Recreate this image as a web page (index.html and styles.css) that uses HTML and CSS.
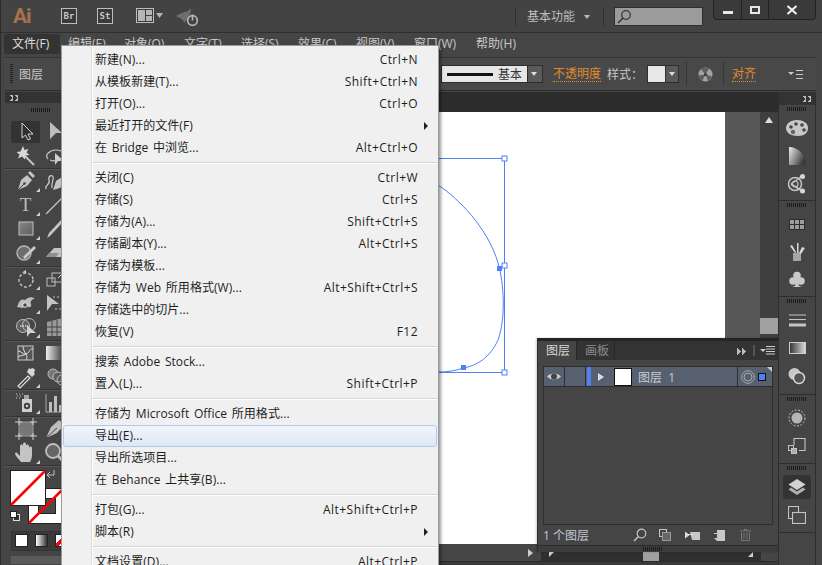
FILE: index.html
```html
<!doctype html>
<html lang="zh-CN">
  <head>
    <meta charset="UTF-8" />
    <title>Adobe Illustrator</title>
    <link rel="stylesheet" href="styles.css">
  </head>

  <body>
    <div class="app">
      <div class="titlebar">
        <span class="logo">Ai</span>
        <span class="bridge-btn bridge-first">Br</span>
        <span class="bridge-btn">St</span>
        <svg class="arrange" width="28" height="16" viewBox="0 0 28 16">
          <rect x="0.500" y="0.500" width="17" height="14" fill="#3c3c3c" stroke="#bdbdbd"/>
          <rect x="2" y="2" width="7" height="11" fill="#b5b5b5"/>
          <rect x="10" y="2" width="6" height="5" fill="#b5b5b5"/>
          <rect x="10" y="8" width="6" height="5" fill="#b5b5b5"/>
          <path d="M20 5h7l-3.500 5z" fill="#b5b5b5"/>
        </svg>
        <svg class="rocket" width="26" height="20" viewBox="0 0 26 20">
          <path d="M1 9c5-3 9-4 12-5l3-3c0 4-1 7-3 10-1 1-2 3-4 5l-1-3-3-2z" fill="#6f6f6f"/>
          <circle cx="17.500" cy="13.500" r="4.800" fill="none" stroke="#b5b5b5" stroke-width="1.700"/>
          <path d="M17.500 7.500v6" stroke="#b5b5b5" stroke-width="1.700"/>
        </svg>
        <span class="title-spacer"></span>
        <span class="title-sep"></span>
        <span class="workspace">基本功能</span>
        <span class="caret"></span>
        <span class="title-sep sep-search"></span>
        <span class="search">
          <svg width="15" height="15" viewBox="0 0 15 15">
            <circle cx="9" cy="6" r="4.300" fill="none" stroke="#333" stroke-width="1.200"/>
            <path d="M6 9l-5 5" stroke="#333" stroke-width="1.500"/>
          </svg>
        </span>
        <div class="winbtns">
          <span class="winbtn win-min"><i></i></span>
          <span class="winbtn win-max"><i></i></span>
          <span class="winbtn win-close">
            <svg width="12" height="10" viewBox="0 0 12 10"><path d="M1.500 1l9 8M10.500 1l-9 8" stroke="#eee" stroke-width="2.200"/></svg>
          </span>
        </div>
      </div>

      <div class="menubar">
        <span class="menubar-item is-open">文件(F)</span>
        <span class="menubar-item">编辑(E)</span>
        <span class="menubar-item w60">对象(O)</span>
        <span class="menubar-item w57">文字(T)</span>
        <span class="menubar-item w57">选择(S)</span>
        <span class="menubar-item w58">效果(C)</span>
        <span class="menubar-item w58">视图(V)</span>
        <span class="menubar-item w62">窗口(W)</span>
        <span class="menubar-item">帮助(H)</span>
      </div>

      <div class="controlbar">
        <span class="grip-v"></span>
        <span class="ctl-label">图层</span>
        <span class="ctl-spacer"></span>
        <span class="stroke-box"><i></i><b>基本</b></span>
        <span class="ctl-drop"></span>
        <span class="ctl-link link-opacity">不透明度</span>
        <span class="ctl-label label-style">样式：</span>
        <span class="style-swatch"></span>
        <span class="ctl-drop drop-small"></span>
        <span class="ctl-sep sep-a"></span>
        <svg class="globe" width="15" height="15" viewBox="0 0 15 15">
          <circle cx="7.500" cy="7.500" r="7" fill="#a2a2a2"/>
          <path d="M7.500 7.500L3 2.500a7 7 0 0 1 8-1zM7.500 7.500l6.500 2a7 7 0 0 1-4 4.500zM7.500 7.500l-3 6a7 7 0 0 1-4-5z" fill="#5e5e5e"/>
          <circle cx="7.500" cy="7.500" r="1.500" fill="#333"/>
        </svg>
        <span class="ctl-sep sep-b"></span>
        <span class="ctl-link link-align">对齐</span>
        <svg class="panel-menu menu-ctl" width="15" height="9" viewBox="0 0 15 9">
          <path d="M0 2h6l-3 3z" fill="#ccc"/>
          <path d="M8 .5h7M8 4.500h7M8 8.500h7" stroke="#ccc"/>
        </svg>
      </div>

      <div class="workarea">
        <div class="tools">
          <div class="collapse-bar"><span class="arrows-left"></span></div>
          <div class="grip-h"></div>

          <div class="tool-group group-select">
            <span class="tool is-active">
              <svg width="24" height="24" viewBox="0 0 24 24"><path d="M8 3l11 11h-5l2.500 5-2.500 1-2.500-5L8 18z" fill="#2f2f2f" stroke="#cfcfcf"/></svg>
            </span>
            <span class="tool">
              <svg width="24" height="24" viewBox="0 0 24 24"><path d="M7 3l12 11h-6l-6 6z" fill="#bdbdbd"/></svg>
            </span>
            <span class="tool">
              <svg width="24" height="24" viewBox="0 0 24 24"><path d="M11 12l9 9" stroke="#c4c4c4" stroke-width="2"/><path d="M9 2l1.500 4 4-1-2 3.500 3 2.500-4 .5-.5 4-3-3-4 2 1.500-4-3-2.500 4-.5z" fill="#d8d8d8"/></svg>
            </span>
            <span class="tool">
              <svg width="24" height="24" viewBox="0 0 24 24"><path d="M5 15c-4-4 2-9 8-9s9 3 7 7c-2 3-8 5-13 3" fill="none" stroke="#c4c4c4" stroke-width="1.200"/><path d="M12 9l9 8h-6l-3 4z" fill="#cfcfcf"/></svg>
            </span>
          </div>

          <div class="tool-group">
            <span class="tool has-more">
              <svg width="24" height="24" viewBox="0 0 24 24"><path d="M4 21l3-10 6-5 5 5-5 6z" fill="#c4c4c4"/><path d="M4 21l6-6" stroke="#444"/><circle cx="10.500" cy="14.500" r="1.300" fill="#444"/><path d="M14 4l2-2 5 5-2 2z" fill="#c4c4c4"/></svg>
            </span>
            <span class="tool">
              <svg width="24" height="24" viewBox="0 0 24 24"><path d="M3 20c-2-4 5-4 3-9-1-4 3-6 4-3 1 3-2 6-1 11" fill="none" stroke="#c4c4c4" stroke-width="1.300"/><path d="M10 21l3-9 6-4 3 3-5 8z" fill="#c4c4c4"/></svg>
            </span>
            <span class="tool has-more tool-type">T</span>
            <span class="tool">
              <svg width="24" height="24" viewBox="0 0 24 24"><path d="M3 21L21 3" stroke="#c4c4c4" stroke-width="1.300"/></svg>
            </span>
            <span class="tool has-more">
              <svg width="24" height="24" viewBox="0 0 24 24"><defs><linearGradient id="rect-fill" x1="0" y1="0" x2="1" y2="1"><stop offset="0" stop-color="#888"/><stop offset="1" stop-color="#5c5c5c"/></linearGradient></defs><rect x="5" y="5" width="14" height="13" fill="url(#rect-fill)" stroke="#b0b0b0" stroke-width="1.200"/></svg>
            </span>
            <span class="tool has-more">
              <svg width="24" height="24" viewBox="0 0 24 24"><path d="M4 21l3-2L20 5l-2-2L6 16z" fill="#c4c4c4"/></svg>
            </span>
            <span class="tool has-more">
              <svg width="24" height="24" viewBox="0 0 24 24"><circle cx="10" cy="12" r="7" fill="#6d6d6d" stroke="#b9b9b9" stroke-width="1.300"/><path d="M11 18L22 7l-2-2L9 16z" fill="#c9c9c9"/></svg>
            </span>
            <span class="tool">
              <svg width="24" height="24" viewBox="0 0 24 24"><path d="M3 16l8-9h10l-3 9z" fill="#c4c4c4"/><path d="M3 16l3-4h10l-3 4z" fill="#909090"/></svg>
            </span>
          </div>

          <div class="tool-group">
            <span class="tool has-more">
              <svg width="24" height="24" viewBox="0 0 24 24"><circle cx="12" cy="13" r="7" fill="none" stroke="#bdbdbd" stroke-width="1.500" stroke-dasharray="3 2"/><path d="M12 6V3L8 5.500z" fill="#d0d0d0"/></svg>
            </span>
            <span class="tool">
              <svg width="24" height="24" viewBox="0 0 24 24"><rect x="4" y="11" width="8" height="8" fill="none" stroke="#bdbdbd"/><rect x="9" y="6" width="11" height="9" fill="none" stroke="#bdbdbd"/><path d="M15 11l4-4" stroke="#ddd"/></svg>
            </span>
            <span class="tool has-more">
              <svg width="24" height="24" viewBox="0 0 24 24"><path d="M3 16c2-6 4-9 8-7 3-3 7-4 10-1-3 0-5 2-4 5 1 2-1 4-3 3l-3-4-2 5z" fill="#bdbdbd"/><circle cx="11" cy="14" r="2.300" fill="#444" stroke="#eee"/></svg>
            </span>
            <span class="tool">
              <svg width="24" height="24" viewBox="0 0 24 24"><path d="M4 4l12 9H9l-5 7z" fill="#c4c4c4"/><path d="M10 6h10v12H12" fill="none" stroke="#bdbdbd" stroke-dasharray="2 2"/></svg>
            </span>
            <span class="tool has-more">
              <svg width="24" height="24" viewBox="0 0 24 24"><circle cx="9" cy="11" r="6.500" fill="#606060" stroke="#bdbdbd"/><circle cx="15" cy="10" r="6.500" fill="none" stroke="#bdbdbd"/><path d="M6 11h8" stroke="#fff" stroke-dasharray="1.500 1"/><path d="M13 10l9 8h-6l-3 4z" fill="#d0d0d0"/></svg>
            </span>
            <span class="tool">
              <svg width="24" height="24" viewBox="0 0 24 24"><path d="M4 7l16-4v18H4z" fill="#9a9a9a"/><path d="M9 6v15M14 5v16M4 12h16M4 17h16" stroke="#444"/></svg>
            </span>
          </div>

          <div class="tool-group group-tight">
            <span class="tool">
              <svg width="24" height="24" viewBox="0 0 24 24"><rect x="4" y="5" width="15" height="14" fill="#555" stroke="#c8c8c8"/><path d="M4 10c4 0 4 4 8 3s3-6 7-5M9 5c0 3 1 5 3 8s0 4 1 6M4 16c3-2 5-1 8-3" fill="none" stroke="#dcdcdc"/></svg>
            </span>
            <span class="tool">
              <svg width="24" height="24" viewBox="0 0 24 24"><defs><linearGradient id="grad-tool"><stop offset="0" stop-color="#eee"/><stop offset="1" stop-color="#333"/></linearGradient></defs><rect x="3" y="5" width="18" height="14" fill="url(#grad-tool)"/></svg>
            </span>
            <span class="tool has-more">
              <svg width="24" height="24" viewBox="0 0 24 24"><path d="M4 21l10-10 2 2L6 23z" fill="#3f3f3f" stroke="#e2e2e2" stroke-width="1.200"/><path d="M13 7l5 5 3-3-1-1 1-3-2-2-3 1-1-1z" fill="#d6d6d6"/></svg>
            </span>
            <span class="tool">
              <svg width="24" height="24" viewBox="0 0 24 24"><circle cx="10" cy="9" r="5" fill="#777" stroke="#bbb"/><circle cx="15" cy="12" r="5" fill="#5c5c5c" stroke="#bbb"/><circle cx="19" cy="15" r="5" fill="none" stroke="#bbb"/></svg>
            </span>
          </div>

          <div class="tool-group group-spray">
            <span class="tool has-more">
              <svg width="24" height="24" viewBox="0 0 24 24"><rect x="8" y="8" width="10" height="13" fill="#d0d0d0"/><circle cx="13" cy="15" r="3.200" fill="#3f3f3f"/><circle cx="13" cy="15" r="1.300" fill="#d0d0d0"/><rect x="10" y="4" width="5" height="4" fill="#a5a5a5"/><path d="M2 3h1M5 3h1M8 3h1M3 5h1M6 5h1M2 7h1M5 7h1" stroke="#ccc"/></svg>
            </span>
            <span class="tool">
              <svg width="24" height="24" viewBox="0 0 24 24"><path d="M3 3v18h18" fill="none" stroke="#aaa"/><rect x="6" y="11" width="3" height="10" fill="#bdbdbd"/><rect x="11" y="5" width="3" height="16" fill="#bdbdbd"/><rect x="16" y="14" width="3" height="7" fill="#bdbdbd"/></svg>
            </span>
          </div>

          <div class="tool-group group-tight">
            <span class="tool">
              <svg width="24" height="24" viewBox="0 0 24 24"><rect x="5" y="5" width="14" height="14" fill="#777" stroke="#999"/><path d="M1 5h7M16 5h7M1 19h7M16 19h7M5 1v7M5 16v7M19 1v7M19 16v7" stroke="#cfcfcf"/></svg>
            </span>
            <span class="tool">
              <svg width="24" height="24" viewBox="0 0 24 24"><path d="M3 21l5-11 8-7 5 5-7 8z" fill="#bdbdbd"/><path d="M3 21l11-10" stroke="#444"/></svg>
            </span>
            <span class="tool has-more">
              <svg width="24" height="24" viewBox="0 0 24 24"><path d="M7 21c-2-3-5-5-6-8 0-2 2-2 3 0l2 2V5c0-2 3-2 3 0V3c0-2 3-2 3 0v2c0-2 3-2 3 0v2c0-2 3-2 3 0v7c0 3-1 5-2 7z" fill="#c4c4c4"/></svg>
            </span>
            <span class="tool">
              <svg width="24" height="24" viewBox="0 0 24 24"><circle cx="10" cy="10" r="7" fill="#666" stroke="#bdbdbd" stroke-width="1.800"/><path d="M15 15l7 7" stroke="#bdbdbd" stroke-width="3"/></svg>
            </span>
          </div>

          <svg class="color-boxes" width="50" height="56" viewBox="0 0 50 56">
            <path d="M44 0v5h-6M40 2l-3 3 3 3" fill="none" stroke="#ccc" stroke-width="0.900"/>
            <rect x="18.500" y="18.500" width="40" height="35" fill="#fff" stroke="#222"/>
            <rect x="28.500" y="28.500" width="17" height="15" fill="#4a4a4a" stroke="#222"/>
            <path d="M19 53L52 20" stroke="#f00" stroke-width="2.500"/>
            <rect x="0.500" y="0.500" width="35" height="35" fill="#fff" stroke="#222"/>
            <path d="M1 35L35 1" stroke="#f00" stroke-width="2.500"/>
            <rect x="3.500" y="44.500" width="6" height="6" fill="#333" stroke="#ddd"/>
            <rect x="0.500" y="41.500" width="6" height="6" fill="#fff" stroke="#222"/>
          </svg>

          <div class="color-modes">
            <span class="mode mode-solid"></span>
            <span class="mode mode-gradient"></span>
            <span class="mode mode-none"></span>
          </div>
          <div class="tools-bottom"></div>
        </div>

        <div class="doc">
          <div class="doc-tabs"></div>
          <div class="doc-main">
            <div class="pasteboard">
              <div class="artboard"></div>
            </div>
            <div class="vscroll">
              <span class="vscroll-arrow"></span>
              <span class="vscroll-thumb"></span>
            </div>
          </div>
          <div class="statusbar">
            <span class="status-arrow"></span>
            <div class="hscroll"><span class="hscroll-thumb"></span></div>
          </div>
          <div class="doc-foot"></div>
        </div>

        <div class="dock">
          <div class="collapse-bar"><span class="arrows-left arrows-dock"></span></div>

          <div class="dock-group">
            <div class="grip-h"></div>
            <span class="dock-icon">
              <svg width="24" height="20" viewBox="0 0 24 20"><path d="M12 2C5 2 1 6 1 10c0 5 5 8 12 8 6 0 10-3 10-8 0-5-5-8-11-8z" fill="#c8c8c8"/><circle cx="6" cy="9" r="1.800" fill="#444"/><circle cx="11" cy="6" r="1.800" fill="#444"/><circle cx="17" cy="7" r="1.800" fill="#444"/><circle cx="19" cy="12" r="1.800" fill="#444"/><circle cx="8" cy="14" r="2.200" fill="#666"/></svg>
            </span>
            <span class="dock-icon">
              <svg width="20" height="20" viewBox="0 0 20 20"><defs><linearGradient id="guide-fill" x1="0" y1="0" x2="1" y2="0.500"><stop offset="0" stop-color="#ededed"/><stop offset="1" stop-color="#3a3a3a"/></linearGradient></defs><path d="M2 1c9 0 17 8 17 18H2z" fill="url(#guide-fill)"/></svg>
            </span>
            <span class="dock-icon">
              <svg width="20" height="22" viewBox="0 0 20 22"><circle cx="8" cy="11" r="6.500" fill="none" stroke="#c4c4c4" stroke-width="1.500"/><circle cx="8" cy="11" r="3" fill="none" stroke="#c4c4c4" stroke-width="1.200"/><path d="M4 11L15 3M4 11l11 7" stroke="#c4c4c4" stroke-width="1.500"/><circle cx="15.500" cy="3.500" r="2.500" fill="#d8d8d8"/><circle cx="15.500" cy="18" r="2.500" fill="#d8d8d8"/></svg>
            </span>
          </div>

          <div class="dock-group">
            <div class="grip-h"></div>
            <span class="dock-icon">
              <svg width="16" height="11" viewBox="0 0 16 11"><rect width="16" height="11" fill="#2e2e2e"/><path d="M1 1h4v4H1zM6 1h4v4H6zM11 1h4v4h-4zM1 6h4v4H1zM6 6h4v4H6zM11 6h4v4h-4z" fill="#9c9c9c"/></svg>
            </span>
            <span class="dock-icon">
              <svg width="16" height="20" viewBox="0 0 16 20"><path d="M4 11h8v8H4z" fill="#a5a5a5"/><path d="M6 11L1 4l2-1 4 7zM8 11V1h1.500v10zM10 11l3-6 3 1-4 6z" fill="#d5d5d5"/></svg>
            </span>
            <span class="dock-icon">
              <svg width="16" height="18" viewBox="0 0 16 18"><circle cx="8" cy="4.500" r="3.800" fill="#c8c8c8"/><circle cx="4" cy="10" r="3.800" fill="#c8c8c8"/><circle cx="12" cy="10" r="3.800" fill="#c8c8c8"/><path d="M7 8h2l1 7 3 1H3l3-1z" fill="#c8c8c8"/></svg>
            </span>
          </div>

          <div class="dock-group group-pad4">
            <div class="grip-h"></div>
            <span class="dock-icon">
              <svg width="17" height="13" viewBox="0 0 17 13"><path d="M0 1h17M0 5.500h17" stroke="#c4c4c4" stroke-width="1.200"/><path d="M0 11h17" stroke="#c4c4c4" stroke-width="3"/></svg>
            </span>
            <span class="dock-icon">
              <svg width="17" height="12" viewBox="0 0 17 12"><defs><linearGradient id="grad-panel"><stop offset="0" stop-color="#333"/><stop offset="1" stop-color="#ddd"/></linearGradient></defs><rect x="0.500" y="0.500" width="16" height="11" fill="url(#grad-panel)" stroke="#ccc"/></svg>
            </span>
            <span class="dock-icon">
              <svg width="18" height="18" viewBox="0 0 18 18"><circle cx="6.500" cy="7" r="6" fill="#c8c8c8"/><circle cx="11" cy="11" r="5.500" fill="#555" stroke="#ddd" stroke-width="1.400"/></svg>
            </span>
          </div>

          <div class="dock-group group-pad3">
            <div class="grip-h"></div>
            <span class="dock-icon">
              <svg width="18" height="18" viewBox="0 0 18 18"><circle cx="9" cy="9" r="8" fill="none" stroke="#c4c4c4" stroke-dasharray="2 1.500"/><circle cx="9" cy="9" r="5.500" fill="#b5b5b5"/></svg>
            </span>
            <span class="dock-icon">
              <svg width="18" height="16" viewBox="0 0 18 16"><path d="M6 7V.5h11v12h-6" fill="none" stroke="#c4c4c4" stroke-width="1.100"/><rect x="0.500" y="7.500" width="5" height="5" fill="none" stroke="#c4c4c4"/><rect x="3.500" y="10.500" width="5" height="5" fill="#aaa" stroke="#c4c4c4"/></svg>
            </span>
          </div>

          <div class="dock-group group-pad3">
            <div class="grip-h"></div>
            <span class="dock-icon is-active">
              <svg width="18" height="18" viewBox="0 0 18 18"><path d="M9 1l8.500 5.500L9 12 .5 6.500z" fill="#d2d2d2"/><path d="M3 9.500L.5 11.500 9 17l8.500-5.500-2.500-2L9 13.500z" fill="#b0b0b0"/></svg>
            </span>
            <span class="dock-icon">
              <svg width="18" height="18" viewBox="0 0 18 18"><rect x="0.500" y="0.500" width="10" height="12" fill="none" stroke="#c4c4c4" stroke-width="1.100"/><rect x="4.500" y="6.500" width="13" height="11" fill="#4a4a4a" stroke="#c4c4c4" stroke-width="1.100"/></svg>
            </span>
          </div>
        </div>
      </div>

      <svg class="art" width="120" height="240" viewBox="0 0 120 240">
        <path d="M0 .5h66.500V214.500H0" fill="none" stroke="#4f80f5"/>
        <path d="M0 27C20 40 50 70 60 105 66 125 68 160 60 182 52 200 38 208 25 210 18 213 8 214 0 214" fill="none" stroke="#4f80f5"/>
        <rect x="64" y="-2" width="5" height="5" fill="#fff" stroke="#4f80f5"/>
        <rect x="64" y="105" width="5" height="5" fill="#fff" stroke="#4f80f5"/>
        <rect x="64" y="212" width="5" height="5" fill="#fff" stroke="#4f80f5"/>
        <rect x="59" y="108" width="5" height="5" fill="#4f80f5"/>
        <rect x="23" y="207" width="5" height="5" fill="#4f80f5"/>
      </svg>

      <div class="layers-panel">
        <div class="panel-tabs">
          <span class="panel-tab is-current">图层</span>
          <span class="panel-tab">画板</span>
          <span class="tabs-spacer"></span>
          <span class="arrows-right"></span>
          <span class="tabs-sep"></span>
          <svg class="panel-menu" width="15" height="9" viewBox="0 0 15 9">
            <path d="M0 3h6l-3 3z" fill="#ccc"/>
            <path d="M6 .5h9M6 3h9M6 5.500h9M6 8h9" stroke="#ccc"/>
          </svg>
        </div>
        <div class="layer-list">
          <div class="layer-row">
            <span class="cell cell-eye">
              <svg width="14" height="9" viewBox="0 0 14 9"><path d="M0 4.500C3 .5 11 .5 14 4.500 11 8.500 3 8.500 0 4.500z" fill="#c8c8c8"/><circle cx="7" cy="4.500" r="3" fill="#444"/></svg>
            </span>
            <span class="cell cell-lock"></span>
            <span class="layer-color"></span>
            <span class="layer-arrow"></span>
            <span class="layer-thumb"></span>
            <span class="layer-name">图层&nbsp; 1</span>
            <span class="cell cell-target">
              <svg width="14" height="14" viewBox="0 0 14 14"><circle cx="7" cy="7" r="6.300" fill="none" stroke="#a8a8a8"/><circle cx="7" cy="7" r="4" fill="none" stroke="#a8a8a8"/></svg>
            </span>
            <span class="layer-select"></span>
          </div>
        </div>
        <div class="panel-foot">
          <span class="foot-text">1 个图层</span>
          <svg class="foot-search" width="14" height="14" viewBox="0 0 14 14"><circle cx="8.500" cy="5.500" r="4.300" fill="none" stroke="#c4c4c4" stroke-width="1.200"/><path d="M5.500 8.500L1 13" stroke="#c4c4c4" stroke-width="1.500"/></svg>
          <svg class="foot-icon" width="12" height="12" viewBox="0 0 12 12"><rect x="0.500" y="0.500" width="7" height="7" fill="none" stroke="#c4c4c4"/><rect x="3.500" y="3.500" width="8" height="8" fill="#666" stroke="#999"/></svg>
          <svg class="foot-icon icon-move" width="15" height="9" viewBox="0 0 15 9"><path d="M5 1h10v8H7z" fill="#c8c8c8"/><path d="M0 1l4 3-4 3zM3 3.500h5" stroke="#ddd" fill="#ddd"/></svg>
          <svg class="foot-icon icon-new" width="11" height="11" viewBox="0 0 11 11"><path d="M0 3h3V0h8v11H3L0 8z" fill="#c8c8c8"/><path d="M0 4h3v4H0z" fill="#444"/></svg>
          <svg class="foot-icon icon-trash" width="11" height="12" viewBox="0 0 11 12"><path d="M0 2h11M4 2V.5h3V2M1.500 3.500v8h8v-8M4 4v6M7 4v6" fill="none" stroke="#777"/></svg>
          <span class="resize-dots"></span>
        </div>
        <div class="panel-grip"><span class="grip-h grip-panel"></span></div>
      </div>

      <div class="filemenu">
        <div class="fm-item"><span>新建(N)...</span><kbd>Ctrl+N</kbd></div>
        <div class="fm-item"><span>从模板新建(T)...</span><kbd>Shift+Ctrl+N</kbd></div>
        <div class="fm-item"><span>打开(O)...</span><kbd>Ctrl+O</kbd></div>
        <div class="fm-item fm-sub"><span>最近打开的文件(F)</span></div>
        <div class="fm-item"><span>在 Bridge 中浏览...</span><kbd>Alt+Ctrl+O</kbd></div>
        <div class="fm-sep"></div>
        <div class="fm-item"><span>关闭(C)</span><kbd>Ctrl+W</kbd></div>
        <div class="fm-item"><span>存储(S)</span><kbd>Ctrl+S</kbd></div>
        <div class="fm-item"><span>存储为(A)...</span><kbd>Shift+Ctrl+S</kbd></div>
        <div class="fm-item"><span>存储副本(Y)...</span><kbd>Alt+Ctrl+S</kbd></div>
        <div class="fm-item"><span>存储为模板...</span></div>
        <div class="fm-item"><span>存储为 Web 所用格式(W)...</span><kbd>Alt+Shift+Ctrl+S</kbd></div>
        <div class="fm-item"><span>存储选中的切片...</span></div>
        <div class="fm-item"><span>恢复(V)</span><kbd>F12</kbd></div>
        <div class="fm-sep"></div>
        <div class="fm-item"><span>搜索 Adobe Stock...</span></div>
        <div class="fm-item"><span>置入(L)...</span><kbd>Shift+Ctrl+P</kbd></div>
        <div class="fm-sep"></div>
        <div class="fm-item"><span>存储为 Microsoft Office 所用格式...</span></div>
        <div class="fm-item is-hover"><span>导出(E)...</span></div>
        <div class="fm-item"><span>导出所选项目...</span></div>
        <div class="fm-item"><span>在 Behance 上共享(B)...</span></div>
        <div class="fm-sep"></div>
        <div class="fm-item"><span>打包(G)...</span><kbd>Alt+Shift+Ctrl+P</kbd></div>
        <div class="fm-item fm-sub"><span>脚本(R)</span></div>
        <div class="fm-sep"></div>
        <div class="fm-item"><span>文档设置(D)...</span><kbd>Alt+Ctrl+P</kbd></div>
      </div>
    </div>
  </body>
</html>
```

FILE: styles.css
```css
* {
  box-sizing: border-box;
}

html,
body {
  margin: 0;
  height: 100%;
  overflow: hidden;
  background: #333;
}

.app {
  position: relative;
  display: flex;
  flex-direction: column;
  width: 822px;
  height: 565px;
  padding: 0 6px 0 4px;
  overflow: hidden;
  background: #454545;
  color: #d2d2d2;
  font: 12px "Open Sans", "Noto Sans CJK SC", sans-serif;
  border-left: 1px solid #2a2a2a;
}

/* title bar */
.titlebar {
  display: flex;
  align-items: center;
  height: 33px;
  margin: 0 -6px 0 -4px;
  padding-left: 12px;
  background: #434343;
  border-bottom: 1px solid #2f2f2f;
}

.logo {
  width: 48px;
  color: #a9714c;
  letter-spacing: -1px;
  font: bold 21px Roboto, sans-serif;
}

.bridge-btn {
  display: flex;
  align-items: center;
  justify-content: center;
  width: 16px;
  height: 16px;
  margin-right: 20px;
  background: #3a3a3a;
  border: 1px solid #bdbdbd;
  color: #c8c8c8;
  font: bold 9px "DejaVu Sans Mono", monospace;
}

.arrange {
  margin: 0 11px 0 3px;
}

.rocket {
  margin-top: 2px;
}

.title-spacer {
  flex: 1;
}

.title-sep {
  width: 1px;
  height: 19px;
  margin-right: 11px;
  background: #2f2f2f;
}

.workspace {
  color: #bdbdbd;
}

.caret {
  width: 0;
  height: 0;
  margin: 2px 13px 0 9px;
  border: 3px solid transparent;
  border-top: 4px solid #bbb;
  border-bottom: 0;
}

.sep-search {
  margin-right: 10px;
}

.search {
  display: flex;
  align-items: center;
  width: 89px;
  height: 19px;
  padding-left: 2px;
  background: #9b9b9b;
  border: 1px solid #2e2e2e;
}

.winbtns {
  display: flex;
  align-self: flex-start;
  height: 20px;
  margin: 0 6px 0 10px;
  background: #3a3a3a;
  border: 1px solid #232323;
  border-top: 0;
  border-radius: 0 0 4px 4px;
}

.winbtn {
  display: flex;
  align-items: center;
  justify-content: center;
  border-right: 1px solid #232323;
}

.win-min {
  width: 28px;
}

.win-min i {
  width: 10px;
  height: 3px;
  margin-top: 6px;
  background: #e6e6e6;
}

.win-max {
  width: 27px;
}

.win-max i {
  width: 10px;
  height: 8px;
  border: 2px solid #e6e6e6;
}

.win-close {
  width: 46px;
  border-right: 0;
}

/* menu bar */
.menubar {
  display: flex;
  height: 24px;
  padding-top: 1px;
  margin-left: -1px;
}

.menubar-item {
  width: 56px;
  height: 20px;
  padding-left: 8px;
  line-height: 19px;
  white-space: nowrap;
  color: #c8c8c8;
}

.menubar-item.is-open {
  background: #333;
  border-radius: 2px;
  color: #ddd;
}

.w57 { width: 57px; }
.w58 { width: 58px; }
.w60 { width: 60px; }
.w62 { width: 62px; }

/* control bar */
.controlbar {
  display: flex;
  align-items: center;
  height: 34px;
  background: #484848;
  border-top: 1px solid #333;
  border-bottom: 1px solid #2c2c2c;
}

.grip-v {
  width: 3px;
  height: 20px;
  margin: 0 6px 0 5px;
  background: repeating-linear-gradient(#222 0 1px, transparent 1px 2px);
}

.ctl-label {
  color: #c8c8c8;
}

.ctl-spacer {
  flex: 1;
}

.stroke-box {
  display: flex;
  align-items: center;
  width: 87px;
  height: 18px;
  padding-left: 5px;
  background: #e6e6e6;
  border: 1px solid #2e2e2e;
  color: #333;
}

.stroke-box i {
  width: 46px;
  height: 3px;
  margin-right: 5px;
  background: #111;
}

.stroke-box b {
  font-weight: normal;
}

.ctl-drop {
  position: relative;
  width: 15px;
  height: 18px;
  background: #5a5a5a;
  border: 1px solid #2e2e2e;
  border-left: 0;
}

.drop-small {
  width: 13px;
}

.ctl-drop::after {
  content: "";
  position: absolute;
  top: 6px;
  left: 3px;
  border: 3px solid transparent;
  border-top: 4px solid #ddd;
  border-bottom: 0;
}

.ctl-link {
  color: #e28a2e;
  border-bottom: 1px dotted #e28a2e;
  line-height: 15px;
}

.link-opacity {
  margin-left: 10px;
}

.label-style {
  margin-left: 6px;
  width: 40px;
}

.style-swatch {
  width: 19px;
  height: 18px;
  background: #e8e8e8;
  border: 1px solid #2e2e2e;
}

.ctl-sep {
  width: 1px;
  height: 24px;
  background: #383838;
}

.sep-a {
  margin-left: 7px;
}

.globe {
  margin: 0 10px 0 11px;
}

.link-align {
  margin-left: 8px;
}

.menu-ctl {
  margin: 0 13px 0 32px;
}

/* work area */
.workarea {
  display: flex;
  flex: 1;
  min-height: 0;
  margin-top: 1px;
}

.tools {
  display: flex;
  flex-direction: column;
  flex: none;
  width: 57px;
  background: #454545;
  border-right: 1px solid #2e2e2e;
}

.collapse-bar {
  display: flex;
  align-items: center;
  height: 11px;
  background: #333;
}

.arrows-left {
  width: 9px;
  height: 6px;
  margin-left: 4px;
  background:
    linear-gradient(to top right, transparent 50%, #bbb 50%) 0 0 / 4px 3px no-repeat,
    linear-gradient(to bottom right, transparent 50%, #bbb 50%) 0 3px / 4px 3px no-repeat,
    linear-gradient(to top right, transparent 50%, #bbb 50%) 5px 0 / 4px 3px no-repeat,
    linear-gradient(to bottom right, transparent 50%, #bbb 50%) 5px 3px / 4px 3px no-repeat;
}

.arrows-dock {
  margin-left: auto;
  margin-right: 4px;
}

.grip-h {
  flex: none;
  width: 20px;
  height: 4px;
  margin: 2px auto 3px;
  background: repeating-linear-gradient(90deg, #1c1c1c 0 1px, transparent 1px 2px);
}

.tools > .grip-h {
  margin: 5px 0 7px 26px;
}

.tool-group {
  display: grid;
  grid-template-columns: 29px 29px;
  grid-auto-rows: 24px;
  padding: 0 0 1px 6px;
  border-bottom: 1px solid #333;
  box-shadow: 0 1px 0 #555;
}

.group-select {
  grid-auto-rows: 24.500px;
  padding-bottom: 0;
}

.group-tight {
  padding-bottom: 0;
}

.group-spray {
  padding-top: 1px;
}

.tool {
  position: relative;
  display: flex;
  align-items: center;
  justify-content: center;
  width: 29px;
  height: 24px;
}

.tool.is-active {
  height: 22px;
  margin-top: 2px;
  background: #333;
  border-radius: 2px;
}

.has-more::after {
  content: "";
  position: absolute;
  right: 0;
  bottom: 1px;
  border-style: solid;
  border-width: 0 0 4px 4px;
  border-color: transparent transparent #d0d0d0 transparent;
}

.tool-type {
  color: #bdbdbd;
  font: 19px "Liberation Serif", serif;
}

.color-boxes {
  flex: none;
  margin: 4px 0 0 5px;
  overflow: visible;
}

.color-modes {
  display: flex;
  gap: 7px;
  height: 20px;
  margin: 5px 0 0 6px;
  padding: 2px 3px;
  background: #3a3a3a;
  border: 1px solid #333;
}

.mode {
  flex: none;
  width: 13px;
  height: 13px;
  border: 1px solid #222;
}

.mode-solid {
  background: #fff;
}

.mode-gradient {
  background: linear-gradient(90deg, #fff, #333);
}

.mode-none {
  background: linear-gradient(to top left, #fff 40%, #f00 40% 60%, #fff 60%);
}

.tools-bottom {
  height: 8px;
  margin: 5px 0 0 6px;
  background: #5a5a5a;
}

/* document */
.doc {
  display: flex;
  flex-direction: column;
  flex: 1;
  min-width: 0;
  background: #535353;
}

.doc-tabs {
  flex: none;
  height: 20px;
  background: #2c2c2c;
}

.doc-main {
  display: flex;
  flex: 1;
  min-height: 0;
}

.pasteboard {
  flex: 1;
  padding-right: 35px;
  background: #585858;
}

.artboard {
  height: 100%;
  background: #fff;
}

.vscroll {
  position: relative;
  flex: none;
  width: 18px;
  background: #3f3f3f;
}

.vscroll-arrow {
  position: absolute;
  top: 5px;
  left: 5px;
  border-style: solid;
  border-width: 0 4px 6px;
  border-color: transparent transparent #ddd;
}

.vscroll-thumb {
  position: absolute;
  top: 206px;
  left: 0;
  width: 100%;
  height: 16px;
  background: #a0a0a0;
}

.statusbar {
  display: flex;
  flex: none;
  height: 18px;
  padding-left: 466px;
  background: #454545;
  border-bottom: 1px solid #2a2a2a;
}

.status-arrow {
  flex: none;
  width: 0;
  height: 0;
  margin: 5px 0 0 0;
  border-style: solid;
  border-width: 4px 0 4px 5px;
  border-color: transparent transparent transparent #ccc;
}

.hscroll {
  position: relative;
  width: 220px;
  height: 9px;
  margin: 8px 0 0 8px;
  background: #2f2f2f;
}

.hscroll::before,
.hscroll::after {
  content: "";
  position: absolute;
  top: 0;
  border-style: solid;
  border-color: #d0d0d0 transparent transparent;
}

.hscroll::before {
  left: 8px;
  border-width: 5px 5px 0 0;
}

.hscroll::after {
  right: 8px;
  border-width: 0 0 5px 5px;
  border-color: transparent transparent #d0d0d0;
}

.hscroll-thumb {
  position: absolute;
  top: 0;
  left: 102px;
  width: 16px;
  height: 100%;
  background: #a0a0a0;
}

.doc-foot {
  flex: none;
  height: 3px;
  background: #3a3a3a;
}

/* right dock */
.dock {
  display: flex;
  flex-direction: column;
  flex: none;
  width: 38px;
  background: #454545;
  border-left: 1px solid #2e2e2e;
  border-right: 1px solid #2e2e2e;
}

.dock .collapse-bar {
  flex: none;
  height: 13px;
}

.dock-group {
  display: flex;
  flex-direction: column;
  align-items: center;
  padding-bottom: 2px;
  border-bottom: 1px solid #2e2e2e;
}

.group-pad4 {
  padding-bottom: 4px;
}

.group-pad3 {
  padding-bottom: 3px;
}

.dock-icon {
  display: flex;
  align-items: center;
  justify-content: center;
  width: 28px;
  height: 28px;
  flex: none;
}

.dock-icon.is-active {
  height: 24px;
  margin: 2px 0;
  background: #333;
  border-radius: 3px;
}

/* vector selection on the artboard */
.art {
  position: absolute;
  top: 158px;
  left: 437px;
  overflow: visible;
}

/* floating layers panel */
.layers-panel {
  position: absolute;
  top: 338px;
  left: 536px;
  display: flex;
  flex-direction: column;
  width: 241px;
  height: 214px;
  background: #454545;
  border-top: 3px solid #242424;
  border-left: 1px solid #2e2e2e;
  box-shadow: -1px 0 2px rgba(0, 0, 0, 0.2);
}

.panel-tabs {
  display: flex;
  align-items: center;
  flex: none;
  height: 19px;
  background: #333;
}

.panel-tab {
  width: 38px;
  height: 19px;
  padding-left: 8px;
  line-height: 19px;
  color: #8c8c8c;
  border-right: 1px solid #262626;
}

.panel-tab.is-current {
  width: 39px;
  background: #454545;
  color: #d8d8d8;
}

.tabs-spacer {
  flex: 1;
}

.arrows-right {
  width: 10px;
  height: 8px;
  background:
    linear-gradient(to bottom left, transparent 50%, #bbb 50%) 0 0 / 4px 4px no-repeat,
    linear-gradient(to top left, transparent 50%, #bbb 50%) 0 4px / 4px 4px no-repeat,
    linear-gradient(to bottom left, transparent 50%, #bbb 50%) 5px 0 / 4px 4px no-repeat,
    linear-gradient(to top left, transparent 50%, #bbb 50%) 5px 4px / 4px 4px no-repeat;
}

.tabs-sep {
  width: 2px;
  height: 11px;
  margin: 0 5px 0 6px;
  background: #555;
}

.panel-menu {
  flex: none;
}

.panel-tabs .panel-menu {
  margin-right: 3px;
}

.layer-list {
  flex: 1;
  margin: 6px 5px 0;
  background: #454545;
  border: 1px solid #2e2e2e;
}

.layer-row {
  position: relative;
  display: flex;
  align-items: center;
  height: 20px;
  background: #56606f;
  border-bottom: 1px solid #2e2e2e;
}

.cell {
  display: flex;
  align-items: center;
  justify-content: center;
  flex: none;
  height: 100%;
  border-right: 1px solid #2e2e2e;
}

.cell-eye {
  width: 21px;
}

.cell-lock {
  width: 21px;
}

.layer-color {
  width: 4px;
  height: 19px;
  margin-left: 1px;
  background: #4f80f5;
}

.layer-arrow {
  width: 0;
  height: 0;
  margin-left: 7px;
  border-style: solid;
  border-width: 4px 0 4px 6px;
  border-color: transparent transparent transparent #ddd;
}

.layer-thumb {
  flex: none;
  width: 18px;
  height: 18px;
  margin-left: 10px;
  background: #fff;
  border: 1px solid #111;
}

.layer-name {
  flex: 1;
  margin-left: 6px;
  color: #c8ccd4;
  white-space: nowrap;
}

.cell-target {
  width: 20px;
  border-right: 0;
  border-left: 1px solid #2e2e2e;
}

.layer-select {
  flex: none;
  width: 8px;
  height: 8px;
  margin: 0 6px 0 1px;
  background: #4f80f5;
  border: 1px solid #111;
}

.layer-row::after {
  content: "";
  position: absolute;
  top: 0;
  right: 0;
  border-style: solid;
  border-width: 0 5px 5px 0;
  border-color: transparent #ccc transparent transparent;
}

.panel-foot {
  display: flex;
  align-items: center;
  flex: none;
  height: 20px;
  padding-left: 5px;
}

.foot-text {
  width: 90px;
  color: #c0c8d4;
}

.foot-search {
  margin-right: 12px;
}

.foot-icon {
  flex: none;
  margin-right: 14px;
}

.icon-new {
  margin-right: 15px;
}

.icon-trash {
  margin-right: 0;
}

.resize-dots {
  width: 10px;
  height: 10px;
  margin: 8px 0 0 auto;
  background: radial-gradient(#1c1c1c 40%, transparent 45%) 0 0 / 2px 2px;
  clip-path: polygon(100% 0, 100% 100%, 0 100%);
}

.panel-grip {
  flex: none;
  height: 7px;
  background: #3d3d3d;
  border-top: 1px solid #2a2a2a;
}

.grip-panel {
  display: block;
  margin: 1px 0 0 105px;
}

/* file menu */
.filemenu {
  position: absolute;
  top: 45px;
  left: 60px;
  width: 378px;
  height: 530px;
  padding-top: 3px;
  background: linear-gradient(90deg, #f0f0f0 29px, #dcdcdc 29px 30px, #fff 30px 31px, #f0f0f0 31px);
  border: 1px solid #9a9a9a;
  border-bottom: 0;
  box-shadow: 2px 2px 3px rgba(0, 0, 0, 0.4);
  color: #1e1e1e;
}

.fm-item {
  position: relative;
  display: flex;
  justify-content: space-between;
  height: 22px;
  padding: 0 20px 0 33px;
  line-height: 21px;
  white-space: nowrap;
  letter-spacing: 0.050px;
  word-spacing: 1.500px;
}

.fm-item kbd {
  font: inherit;
  letter-spacing: 0.450px;
}

.fm-item.is-hover {
  margin: 0 1px;
  padding-left: 31px;
  background: linear-gradient(#f1f5fb, #dfe8f5);
  border: 1px solid #aecbee;
  border-radius: 3px;
  line-height: 19px;
}

.fm-sub::after {
  content: "";
  position: absolute;
  top: 7px;
  right: 10px;
  border-style: solid;
  border-width: 4px 0 4px 4px;
  border-color: transparent transparent transparent #222;
}

.fm-sep {
  height: 8px;
  margin-left: 30px;
  background: linear-gradient(transparent 3px, #d7d7d7 3px 4px, #fff 4px 5px, transparent 5px);
}
```
